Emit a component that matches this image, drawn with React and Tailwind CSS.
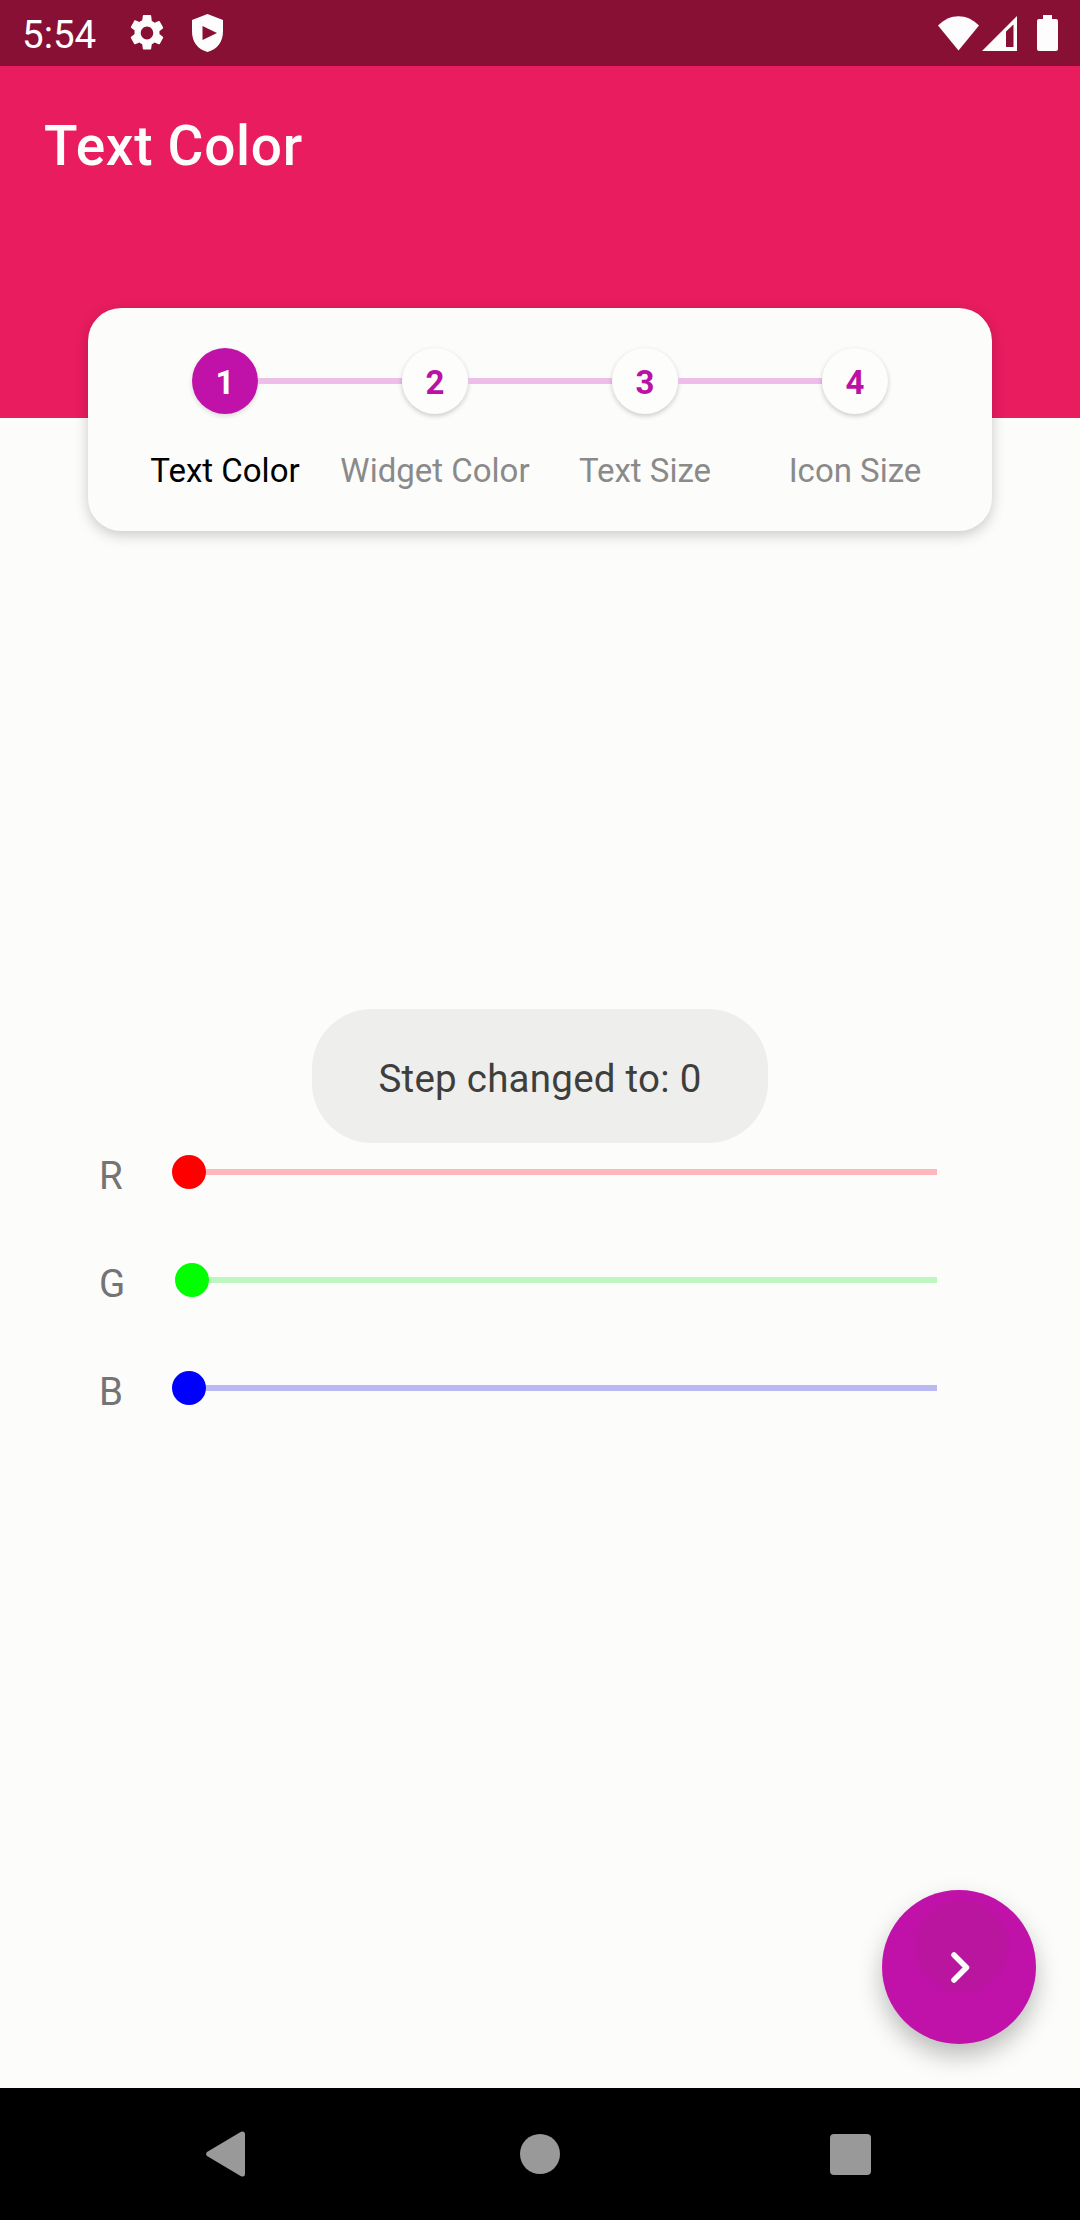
const steps = [
  { n: 1, label: "Text Color", active: true },
  { n: 2, label: "Widget Color" },
  { n: 3, label: "Text Size" },
  { n: 4, label: "Icon Size" },
];

const sliders = [
  { label: "R", thumb: "bg-[#ff0000]", track: "bg-[#ffb6bd]", offset: "ml-0" },
  { label: "G", thumb: "bg-[#00ff00]", track: "bg-[#bdf6bf]", offset: "ml-[3px]" },
  { label: "B", thumb: "bg-[#0000ff]", track: "bg-[#bbb9f4]", offset: "ml-0" },
];

function StatusBar() {
  return (
    <div className="flex h-[66px] shrink-0 items-center bg-[#881034] text-white">
      <span className="ml-[22px] mt-[4px] w-[108px] text-[38.5px] leading-none">5:54</span>
      <svg className="h-[36px] w-[34px]" viewBox="2.2 2 19.6 20" preserveAspectRatio="none" fill="#fdfdfd">
        <path d="M19.14 12.94c.04-.3.06-.61.06-.94 0-.32-.02-.64-.07-.94l2.03-1.58c.18-.14.23-.41.12-.61l-1.92-3.32c-.12-.22-.37-.29-.59-.22l-2.39.96c-.5-.38-1.03-.7-1.62-.94L14.4 2.4c-.04-.24-.24-.4-.48-.4h-3.84c-.24 0-.43.16-.47.4l-.36 2.55c-.59.24-1.13.57-1.62.94l-2.39-.96c-.22-.08-.47 0-.59.22L2.74 8.47c-.12.21-.08.47.12.61l2.03 1.58c-.05.3-.09.63-.09.94s.02.64.07.94l-2.03 1.58c-.18.14-.23.41-.12.61l1.92 3.32c.12.22.37.29.59.22l2.39-.96c.5.38 1.03.7 1.62.94l.36 2.54c.05.24.24.41.48.41h3.84c.24 0 .44-.17.47-.41l.36-2.54c.59-.24 1.13-.56 1.62-.94l2.39.96c.22.08.47 0 .59-.22l1.92-3.32c.12-.22.07-.47-.12-.61l-2.01-1.58zM12 15.6c-1.98 0-3.6-1.62-3.6-3.6s1.62-3.6 3.6-3.6 3.6 1.62 3.6 3.6-1.62 3.6-3.6 3.6z" />
      </svg>
      <svg className="ml-[28px] h-[38px] w-[31px]" viewBox="0 0 31 38" fill="#fdfdfd">
        <path fillRule="evenodd" d="M15.500 0 L31 6 V17.500 C31 28 25 35.500 15.500 38 C6 35.500 0 28 0 17.500 V6 Z M10.500 12 V26 L25 19 Z" />
      </svg>
      <svg className="ml-auto h-[35px] w-[41px]" viewBox="0 0 41 35" fill="#fdfdfd">
        <path d="M0 9.500 C12 -3 29 -3 41 9.500 L20.500 34.500 Z" />
      </svg>
      <svg className="ml-[3px] h-[35px] w-[35px]" viewBox="0 0 35 35" fill="#fdfdfd">
        <path fillRule="evenodd" d="M35 0 V35 H0 Z M31.500 8.500 L24 15.500 V31 H31.500 Z" />
      </svg>
      <svg className="ml-[20px] mr-[22px] h-[36px] w-[21px]" viewBox="0 0 21 36" fill="#fdfdfd">
        <path d="M6 0 H15 V4 H19 a2 2 0 0 1 2 2 V34 a2 2 0 0 1 -2 2 H2 a2 2 0 0 1 -2 -2 V6 a2 2 0 0 1 2 -2 H6 Z" />
      </svg>
    </div>
  );
}

function Stepper() {
  return (
    <div className="relative mx-[88px] -mt-[110px] flex h-[223px] shrink-0 rounded-[33px] bg-[#fcfcfb] pl-[32px] pt-[40px] shadow-[0_4px_14px_rgba(0,0,0,0.2)]">
      {steps.map((s, i) => (
        <div key={s.n} className="flex w-[210px] flex-col items-center">
          <div className="flex w-full items-center">
            <div className={i === 0 ? "h-[6px] flex-1" : "h-[6px] flex-1 bg-[#edbeea]"} />
            <div
              className={
                s.active
                  ? "flex h-[66px] w-[66px] items-center justify-center rounded-full bg-[#c012a9] text-[33px] font-bold leading-none text-white shadow-[0_2px_5px_rgba(0,0,0,0.14)]"
                  : "flex h-[66px] w-[66px] items-center justify-center rounded-full bg-[#fdfdfc] text-[33px] font-bold leading-none text-[#b912a4] shadow-[0_2px_5px_rgba(0,0,0,0.2)]"
              }
            >
              <span className="mt-[3px]">{s.n}</span>
            </div>
            <div className={i === 3 ? "h-[6px] flex-1" : "h-[6px] flex-1 bg-[#edbeea]"} />
          </div>
          <span
            className={
              s.active
                ? "mt-[37px] whitespace-nowrap text-[33px] leading-[39px] text-black"
                : "mt-[37px] whitespace-nowrap text-[33px] leading-[39px] text-[#8a8a8a]"
            }
          >
            {s.label}
          </span>
        </div>
      ))}
    </div>
  );
}

function ColorSlider({ label, thumb, track, offset }) {
  return (
    <div className="flex h-[108px] items-center pl-[99px] pr-[143px]">
      <span className="mt-[8px] w-[73px] text-[38.5px] leading-none text-[#747474]">{label}</span>
      <div className="flex flex-1 items-center">
        <div className={`${offset} ${thumb} h-[34px] w-[34px] rounded-full`} />
        <div className={`${track} h-[6px] flex-1`} />
      </div>
    </div>
  );
}

function NavBar() {
  return (
    <div className="flex h-[132px] shrink-0 items-center bg-black pl-[206px] pr-[209px]">
      <svg className="h-[46px] w-[39px]" viewBox="0 0 39 46" fill="#999999">
        <path d="M1 21 L35 .8 Q39 -.5 39 3 V43 Q39 46.500 35 45.200 L1 25 Q-.8 23 1 21 Z" />
      </svg>
      <div className="ml-[275px] h-[40px] w-[40px] rounded-full bg-[#999999]" />
      <div className="ml-auto h-[41px] w-[41px] rounded-[4px] bg-[#999999]" />
    </div>
  );
}

export default function App() {
  return (
    <div className="relative flex h-[2220px] w-[1080px] flex-col overflow-hidden bg-[#fcfcfb] font-['Roboto',sans-serif]">
      <StatusBar />
      <header className="h-[352px] shrink-0 bg-[#e91c60] pl-[44px] pt-[48px]">
        <h1 className="text-[55px] font-medium leading-[64px] tracking-[0.7px] text-[#fdfdfd]">Text Color</h1>
      </header>
      <Stepper />
      <main className="flex flex-1 flex-col pt-[587px]">
        {sliders.map((s) => (
          <ColorSlider key={s.label} {...s} />
        ))}
        <button className="relative mb-[44px] ml-auto mr-[44px] mt-auto flex h-[154px] w-[154px] items-center justify-center rounded-full bg-[#c012a9] shadow-[0_12px_24px_rgba(0,0,0,0.26)]">
          <span className="absolute left-[34px] top-[10px] h-[92px] w-[92px] rounded-full bg-[#b9159f] blur-[2px]" />
          <svg className="relative ml-[2px] h-[31px] w-[19px]" viewBox="0 0 19 31" fill="none" stroke="#ffffff" strokeWidth="5.500" strokeLinecap="round" strokeLinejoin="round">
            <path d="M3 3 L15.500 15.500 L3 28" />
          </svg>
        </button>
      </main>
      <div className="absolute left-[312px] top-[1009px] flex h-[134px] w-[456px] items-center justify-center rounded-[60px] bg-[#eeeeed]">
        <span className="mt-[6px] whitespace-nowrap text-[38.5px] leading-none tracking-[0.25px] text-[#3e3e3c]">Step changed to: 0</span>
      </div>
      <NavBar />
    </div>
  );
}
